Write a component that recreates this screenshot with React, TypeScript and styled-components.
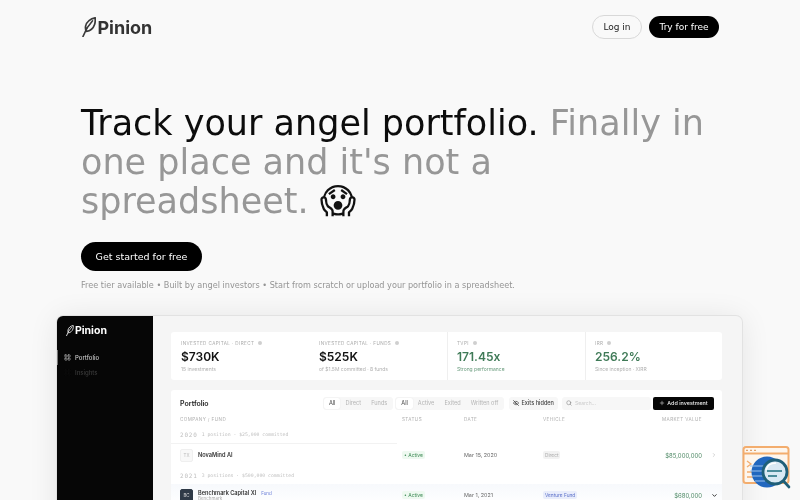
import React from "react";
import styled, { createGlobalStyle } from "styled-components";
import { ChevronDown, ChevronRight, EyeOff, LayoutGrid, Plus, Search } from "lucide-react";

const GlobalStyle = createGlobalStyle`
  html, body {
    margin: 0;
    height: 500px;
    overflow: hidden;
    background: #f9f9f9;
  }
`;
const Page = styled.div`
  position: relative;
  width: 800px;
  height: 500px;
  overflow: hidden;
  font-family: "DejaVu Sans", sans-serif;
  background: #f9f9f9;
`;
const Nav = styled.header`
  display: flex;
  align-items: center;
  justify-content: space-between;
  padding: 8px 81px 0 82px;
  height: 38px;
  will-change: transform;
`;
const Brand = styled.div`
  display: flex;
  align-items: center;
  gap: 1px;
  font: 700 ${(p: { $size: number }) => p.$size}px "Inter", sans-serif;
`;
const DarkBrand = styled(Brand)`
  color: #333;
`;
const LightBrand = styled(Brand)`
  color: #fff;
  padding-left: 9px;
`;
const NavActions = styled.div`
  display: flex;
  gap: 7px;
`;
const LoginButton = styled.button`
  height: 22px;
  width: 48px;
  padding: 0;
  box-sizing: content-box;
  border: 1px solid #d8d8d8;
  border-radius: 12px;
  background: #f9f9f9;
  color: #222;
  font: 400 9px "DejaVu Sans", sans-serif;
`;
const TryButton = styled.button`
  height: 22px;
  width: 70px;
  margin-top: 1px;
  padding: 0;
  border: 0;
  border-radius: 11px;
  background: #000;
  color: #fff;
  font: 400 9px "DejaVu Sans", sans-serif;
`;
const Hero = styled.section`
  padding: 58px 81px 0;
  will-change: transform;
`;
const Headline = styled.h1`
  margin: 0;
  width: 640px;
  font-size: 35px;
  line-height: 39px;
  font-weight: 400;
  color: #979797;
  span {
    color: #0c0c0c;
  }
`;
const Emoji = styled.i`
  font-style: normal;
  color: #111;
`;
const CTA = styled.button`
  display: block;
  margin-top: 21px;
  width: 121px;
  height: 29px;
  padding: 0;
  border: 0;
  border-radius: 15px;
  background: #000;
  color: #fff;
  font: 400 9.5px "DejaVu Sans", sans-serif;
`;
const Note = styled.p`
  margin: 9px 0 0;
  font-size: 8.15px;
  line-height: 11px;
  color: #949494;
`;
const Mock = styled.div`
  display: flex;
  width: 685px;
  height: 300px;
  margin: 25px 0 0 57px;
  border-radius: 6px 6px 0 0;
  background: #f5f5f5;
  box-shadow: 0 0 0 1px #e2e2e2, 0 2px 30px rgba(0, 0, 0, 0.09);
  overflow: hidden;
  filter: blur(0.35px);
  font-family: "Inter", sans-serif;
`;
const Sidebar = styled.aside`
  flex: 0 0 96px;
  background: #060606;
  padding-top: 8px;
`;
const SideItem = styled.div<{ $active?: boolean }>`
  display: flex;
  align-items: center;
  gap: 4px;
  height: 15px;
  padding-left: 7px;
  font-size: 6px;
  font-weight: 500;
  color: ${(p) => (p.$active ? "#c8c8c8" : "#3a3a3a")};
  box-shadow: ${(p) => (p.$active ? "inset 1px 0 0 #777" : "none")};
`;
const SideNav = styled.nav`
  display: flex;
  flex-direction: column;
  margin-top: 13px;
`;
const Content = styled.main`
  flex: 1;
  padding: 16px 20px 0 18px;
`;
const Stats = styled.div`
  display: grid;
  grid-template-columns: 138px 138px 138px 1fr;
  height: 48px;
  border-radius: 3px;
  background: #fff;
`;
const Stat = styled.div<{ $divided?: boolean }>`
  padding: 8px 9px 0;
  border-left: 1px solid ${(p) => (p.$divided ? "#efefef" : "transparent")};
`;
const StatLabel = styled.div`
  display: flex;
  align-items: center;
  gap: 4px;
  font-size: 4.6px;
  letter-spacing: 0.4px;
  color: #aaa;
  height: 6px;
  &::after {
    content: "";
    width: 4px;
    height: 4px;
    border-radius: 50%;
    background: #cfcfcf;
  }
`;
const StatValue = styled.div<{ $green?: boolean }>`
  margin-top: 4px;
  font-size: 12px;
  line-height: 14px;
  font-weight: 600;
  color: ${(p) => (p.$green ? "#3f7a57" : "#111")};
`;
const StatHint = styled.div<{ $green?: boolean }>`
  margin-top: 2px;
  font-size: 5px;
  color: ${(p) => (p.$green ? "#6a9c7e" : "#b0b0b0")};
`;
const Panel = styled.section`
  margin-top: 10px;
  height: 120px;
  border-radius: 3px 3px 0 0;
  background: #fff;
`;
const Toolbar = styled.div`
  display: flex;
  align-items: center;
  height: 26px;
  padding: 0 8px 0 9px;
`;
const PanelTitle = styled.div`
  flex: 1;
  font-size: 7px;
  font-weight: 600;
  color: #222;
`;
const Segments = styled.div`
  display: flex;
  align-items: center;
  height: 13px;
  margin-right: 2px;
  padding: 0 1px;
  border-radius: 3px;
  background: #f7f7f7;
`;
const Segment = styled.div<{ $on?: boolean }>`
  display: flex;
  align-items: center;
  height: 11px;
  padding: 0 5px;
  border-radius: 2px;
  font-size: 5.6px;
  color: ${(p) => (p.$on ? "#444" : "#b5b5b5")};
  background: ${(p) => (p.$on ? "#fff" : "transparent")};
  box-shadow: ${(p) => (p.$on ? "0 0 1px #ddd" : "none")};
`;
const ExitsToggle = styled(Segments)`
  gap: 2px;
  margin-left: 3px;
  padding: 0 4px;
  font-size: 5.6px;
  font-weight: 500;
  color: #444;
`;
const SearchBox = styled(Segments)`
  gap: 3px;
  flex: 0 0 89px;
  box-sizing: border-box;
  padding: 0 4px;
  margin-left: 2px;
  font-size: 5px;
  color: #ccc;
`;
const AddButton = styled.div`
  display: flex;
  align-items: center;
  justify-content: center;
  gap: 2px;
  flex: 0 0 61px;
  height: 13px;
  border-radius: 2px;
  background: #060606;
  color: #eee;
  font-size: 5.4px;
  font-weight: 500;
`;
const TableGrid = styled.div`
  display: grid;
  grid-template-columns: 222px 62px 79px 80px 1fr 20px;
  align-items: center;
  padding-left: 9px;
`;
const HeadRow = styled(TableGrid)`
  height: 6px;
  font-size: 4.6px;
  letter-spacing: 0.4px;
  color: #b0b0b0;
`;
const RightCell = styled.div`
  text-align: right;
`;
const YearRow = styled.div`
  display: flex;
  align-items: center;
  gap: 4px;
  width: 226px;
  height: 18px;
  padding-left: 9px;
  box-sizing: border-box;
  font: 4.8px "DejaVu Sans Mono", monospace;
  color: #c0c0c0;
  b {
    font-weight: 400;
    font-size: 6px;
    letter-spacing: 0.8px;
  }
`;
const RuledYear = styled(YearRow)`
  border-bottom: 1px solid #f2f2f2;
  margin-top: 3px;
  height: 19px;
`;
const Row = styled(TableGrid)`
  height: 22px;
  font-size: 5.6px;
  color: #333;
`;
const FundRow = styled(Row)`
  background: linear-gradient(#f7f9fc, #fff);
`;
const NameCell = styled.div`
  display: flex;
  align-items: center;
  gap: 5px;
`;
const Avatar = styled.div<{ $dark?: boolean }>`
  display: flex;
  align-items: center;
  justify-content: center;
  width: 13px;
  height: 13px;
  box-sizing: border-box;
  border: 1px solid ${(p) => (p.$dark ? "#2f3a47" : "#efefef")};
  border-radius: 2px;
  font-size: 4.500px;
  color: ${(p) => (p.$dark ? "#ddd" : "#bbb")};
  background: ${(p) => (p.$dark ? "#2f3a47" : "#f8f8f8")};
`;
const NameText = styled.div`
  font-weight: 600;
  color: #333;
  small {
    display: block;
    font-size: 4.5px;
    font-weight: 400;
    color: #aaa;
  }
  em {
    font-style: normal;
    font-size: 4.5px;
    font-weight: 400;
    color: #6c7fd8;
    margin-left: 5px;
  }
`;
const StatusBadge = styled.span`
  display: inline-block;
  padding: 1px 2px;
  border-radius: 2px;
  font-size: 5px;
  color: #3d8a55;
  background: #eef9f0;
`;
const DateCell = styled.div`
  color: #666;
  font-size: 5.4px;
`;
const VehicleBadge = styled.span<{ $fund?: boolean }>`
  display: inline-block;
  padding: 1px 2px;
  border-radius: 2px;
  font-size: 4.8px;
  color: ${(p) => (p.$fund ? "#5a6fc8" : "#aaa")};
  background: ${(p) => (p.$fund ? "#e9edfb" : "#f2f2f2")};
`;
const MoneyCell = styled(RightCell)`
  font-size: 6px;
  color: #4f8a66;
`;
const Chevron = styled.div`
  display: flex;
  justify-content: center;
  padding-left: 4px;
`;
const Widget = styled.div`
  position: absolute;
  left: 741px;
  top: 445px;
  line-height: 0;
`;

const Feather = ({ size, color }: { size: number; color: string }) => (
  <svg width={size * 0.72} height={size} viewBox="0 0 14 20" fill="none">
    <path d="M0.800 19.500 L4.800 11" stroke={color} strokeWidth="1.700" strokeLinecap="round" />
    <path
      d="M13 0.800 C8.600 1.600 4.200 4.600 3.400 9.200 C3 11.400 3.400 13 4.200 14.400 C8 13.800 11.200 11 12.400 7.400 C13.100 5.200 13.200 3 13 0.800 Z"
      stroke={color}
      strokeWidth="1.700"
      strokeLinejoin="round"
    />
    <path d="M4.800 11 L10.400 3.800" stroke={color} strokeWidth="1.500" strokeLinecap="round" />
  </svg>
);

const SearchWidget = () => (
  <svg width="51" height="47" viewBox="0 0 51 47" fill="none">
    <rect x="2.500" y="2" width="45" height="36" rx="2.500" fill="#fdf6ee" stroke="#f3ad6e" strokeWidth="2" />
    <path d="M2.500 8.500H47.500" stroke="#f3ad6e" strokeWidth="1.800" />
    <path d="M5 5.300h2M9 5.300h2M13 5.300h2" stroke="#d9904f" strokeWidth="1" />
    <path d="M6 16l4 3-4 3M6 27h6M6 32h6" stroke="#f3ad6e" strokeWidth="1.300" />
    <circle cx="26" cy="27" r="15.500" fill="#2167bf" />
    <path d="M9 21h14M9 26h14M11 31h12M14 36h10" stroke="#9cc2ec" strokeWidth="1.200" />
    <circle cx="34" cy="27" r="12" fill="#d9e9f3" stroke="#1f5f78" strokeWidth="2.800" />
    <path d="M25 25c1-4 4-7 10-7" stroke="#fff" strokeWidth="1.400" />
    <path d="M26 26h15M27 31h9" stroke="#1f6f7f" strokeWidth="1.500" />
    <path d="M42.500 36l5.500 6" stroke="#1f5f78" strokeWidth="2.600" strokeLinecap="round" />
  </svg>
);

const App = () => (
  <Page>
    <GlobalStyle />
    <Nav>
      <DarkBrand $size={18}>
        <Feather size={20} color="#3a3a3a" />
        Pinion
      </DarkBrand>
      <NavActions>
        <LoginButton>Log in</LoginButton>
        <TryButton>Try for free</TryButton>
      </NavActions>
    </Nav>
    <Hero>
      <Headline>
        <span>Track your angel portfolio.</span> Finally in one place and it's not a spreadsheet. <Emoji>😱</Emoji>
      </Headline>
      <CTA>Get started for free</CTA>
      <Note>Free tier available • Built by angel investors • Start from scratch or upload your portfolio in a spreadsheet.</Note>
    </Hero>
    <Mock>
      <Sidebar>
        <LightBrand $size={10.5}>
          <Feather size={11} color="#ddd" />
          Pinion
        </LightBrand>
        <SideNav>
          <SideItem $active>
            <LayoutGrid size={7} />
            Portfolio
          </SideItem>
          <SideItem>
            <LayoutGrid size={7} color="#111" />
            Insights
          </SideItem>
        </SideNav>
      </Sidebar>
      <Content>
        <Stats>
          <Stat>
            <StatLabel>INVESTED CAPITAL · DIRECT</StatLabel>
            <StatValue>$730K</StatValue>
            <StatHint>15 investments</StatHint>
          </Stat>
          <Stat>
            <StatLabel>INVESTED CAPITAL · FUNDS</StatLabel>
            <StatValue>$525K</StatValue>
            <StatHint>of $1.5M committed · 8 funds</StatHint>
          </Stat>
          <Stat $divided>
            <StatLabel>TVPI</StatLabel>
            <StatValue $green>171.45x</StatValue>
            <StatHint $green>Strong performance</StatHint>
          </Stat>
          <Stat $divided>
            <StatLabel>IRR</StatLabel>
            <StatValue $green>256.2%</StatValue>
            <StatHint>Since inception · XIRR</StatHint>
          </Stat>
        </Stats>
        <Panel>
          <Toolbar>
            <PanelTitle>Portfolio</PanelTitle>
            <Segments>
              <Segment $on>All</Segment>
              <Segment>Direct</Segment>
              <Segment>Funds</Segment>
            </Segments>
            <Segments>
              <Segment $on>All</Segment>
              <Segment>Active</Segment>
              <Segment>Exited</Segment>
              <Segment>Written off</Segment>
            </Segments>
            <ExitsToggle>
              <EyeOff size={6} strokeWidth={3} />
              Exits hidden
            </ExitsToggle>
            <SearchBox>
              <Search size={6} color="#777" />
              Search...
            </SearchBox>
            <AddButton>
              <Plus size={6} />
              Add investment
            </AddButton>
          </Toolbar>
          <HeadRow>
            <div>COMPANY / FUND</div>
            <div>STATUS</div>
            <div>DATE</div>
            <div>VEHICLE</div>
            <RightCell>MARKET VALUE</RightCell>
            <div />
          </HeadRow>
          <RuledYear>
            <b>2020</b> 1 position · $25,000 committed
          </RuledYear>
          <Row>
            <NameCell>
              <Avatar>TX</Avatar>
              <NameText>NovaMind AI</NameText>
            </NameCell>
            <div>
              <StatusBadge>• Active</StatusBadge>
            </div>
            <DateCell>Mar 15, 2020</DateCell>
            <div>
              <VehicleBadge>Direct</VehicleBadge>
            </div>
            <MoneyCell>$85,000,000</MoneyCell>
            <Chevron>
              <ChevronRight size={6} color="#aaa" />
            </Chevron>
          </Row>
          <YearRow>
            <b>2021</b> 3 positions · $500,000 committed
          </YearRow>
          <FundRow>
            <NameCell>
              <Avatar $dark>BC</Avatar>
              <NameText>
                Benchmark Capital XI<em>Fund</em>
                <small>Benchmark</small>
              </NameText>
            </NameCell>
            <div>
              <StatusBadge>• Active</StatusBadge>
            </div>
            <DateCell>Mar 1, 2021</DateCell>
            <div>
              <VehicleBadge $fund>Venture Fund</VehicleBadge>
            </div>
            <MoneyCell>$680,000</MoneyCell>
            <Chevron>
              <ChevronDown size={7} color="#222" strokeWidth={3} />
            </Chevron>
          </FundRow>
        </Panel>
      </Content>
    </Mock>
    <Widget>
      <SearchWidget />
    </Widget>
  </Page>
);

export default App;
